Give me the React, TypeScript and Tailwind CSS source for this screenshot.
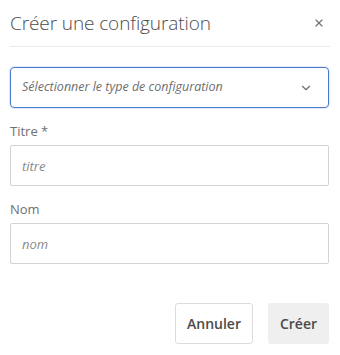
import { ChevronDown, X } from 'lucide-react';

const font = { fontFamily: '"Open Sans", "Noto Sans", sans-serif' };

const Field = ({ label, placeholder }: { label: string; placeholder: string }) => (
  <label className="flex flex-col">
    <span className="text-[13px] leading-[16px] text-[#707070] mb-[6px]">{label}</span>
    <input
      placeholder={placeholder}
      className="h-[41px] w-full border border-[#d3d3d3] rounded-[2px] px-[11px] text-[13px] italic text-[#4b4b4b] placeholder:text-[#8a8a8a] outline-none"
    />
  </label>
);

export default function App() {
  return (
    <div className="w-[340px] h-[355px] bg-white px-[10px]" style={font}>
      <div className="flex items-center justify-between h-[47px] border-b border-[#eaeaea] pr-[5px]">
        <h2 className="text-[19px] font-light text-[#4b4b4b] tracking-[-0.1px]">
          Créer une configuration
        </h2>
        <X size={12} strokeWidth={2.4} className="text-[#707070]" />
      </div>

      <div className="mt-[20px] flex items-center justify-between h-[41px] w-[319px] border border-[#4a7bd0] rounded-[4px] px-[11px] shadow-[0_0_0_1px_rgba(74,123,208,0.15)]">
        <span className="text-[12.5px] italic text-[#6e6e6e]">
          Sélectionner le type de configuration
        </span>
        <ChevronDown size={14} strokeWidth={2} className="text-[#6e6e6e] mr-[4px]" />
      </div>

      <div className="mt-[15px] flex flex-col gap-[15px] w-[319px]">
        <Field label="Titre *" placeholder="titre" />
        <Field label="Nom" placeholder="nom" />
      </div>

      <div className="mt-[39px] flex justify-end gap-[15px] w-[319px]">
        <button className="h-[41px] w-[78px] border border-[#dcdcdc] rounded-[3px] bg-white text-[14px] font-semibold text-[#4b4b4b]">
          Annuler
        </button>
        <button className="h-[41px] w-[61px] rounded-[3px] bg-[#efefef] text-[14px] font-semibold text-[#4b4b4b]">
          Créer
        </button>
      </div>
    </div>
  );
}
